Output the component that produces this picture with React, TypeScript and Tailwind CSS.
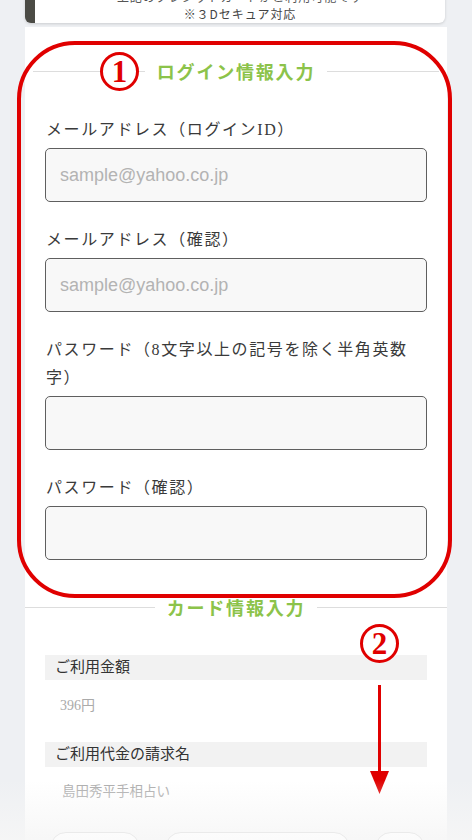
import React from "react";

const serif = "font-['Liberation_Serif','Noto_Sans_CJK_JP',serif]";
const sans = "font-['Noto_Sans_CJK_JP','Noto_Sans',sans-serif]";

interface FieldProps {
  label: React.ReactNode;
  placeholder?: string;
  type?: string;
  first?: boolean;
}

function Field({ label, placeholder, type = "text", first }: FieldProps) {
  return (
    <div className={first ? "mt-[31px]" : "mt-[24px]"}>
      <label className={`block w-[368px] pl-[1px] text-[16px] leading-[28px] tracking-[0.1em] text-[#3a3a3a] ${serif}`}>
        {label}
      </label>
      <input
        type={type}
        placeholder={placeholder}
        className="mt-[4px] block h-[54px] w-full rounded-[5px] border border-[#5f5f5f] bg-[#f8f8f8] px-[14px] font-['Liberation_Sans',Arial,sans-serif] text-[18px] text-[#333] placeholder:text-[#b3b3b3] focus:outline-none"
      />
    </div>
  );
}

function SectionTitle({ text, inset }: { text: string; inset?: boolean }) {
  return (
    <div className={`flex h-[28px] items-center ${inset ? "px-[8px]" : ""}`}>
      <div className="h-px flex-1 bg-[#dddddd]" />
      <span className={`mx-[12px] text-[18px] font-bold leading-[28px] tracking-[0.1em] text-[#8cc34a] ${sans}`}>
        {text}
      </span>
      <div className="h-px flex-1 bg-[#dddddd]" />
    </div>
  );
}

function CircledNumber({ n, className }: { n: string; className: string }) {
  return (
    <div
      className={`absolute flex h-[39px] w-[39px] items-center justify-center rounded-full border-[3px] border-[#e00000] bg-white ${className}`}
    >
      <span className="font-['Liberation_Serif',serif] text-[31px] font-bold leading-none text-[#e00000]">{n}</span>
    </div>
  );
}

export default function App() {
  return (
    <div className="relative h-[840px] overflow-hidden bg-[#eef0f3]">
      {/* card accepted notice (scrolled mostly out of view) */}
      <div className="ml-[25px] mt-[-14px] w-[420px] rounded-b-[6px] border-l-[10px] border-[#4b4b45] bg-white pb-[1px] pt-[2px] text-center shadow-[0_1px_3px_rgba(0,0,0,0.15)]">
        <p className={`text-[12px] leading-[17px] tracking-[0.08em] text-[#555] ${sans}`}>
          上記のクレジットカードがご利用可能です
        </p>
        <p className={`text-[12px] leading-[17px] tracking-[0.08em] text-[#444] ${sans}`}>※３Dセキュア対応</p>
      </div>

      <div className="relative ml-[25px] mt-[4px] w-[422px] bg-white pb-[80px] pt-[30px]">
        {/* login info */}
        <SectionTitle text="ログイン情報入力" inset />
        <div className="px-[20px]">
          <Field first label="メールアドレス（ログインID）" placeholder="sample@yahoo.co.jp" type="email" />
          <Field label="メールアドレス（確認）" placeholder="sample@yahoo.co.jp" type="email" />
          <Field label="パスワード（8文字以上の記号を除く半角英数字）" type="password" />
          <Field label="パスワード（確認）" type="password" />
        </div>

        {/* card info */}
        <div className="mt-[33px]">
          <SectionTitle text="カード情報入力" />
        </div>
        <div className="px-[20px]">
          <div className={`mt-[34px] h-[25px] bg-[#f2f2f2] pl-[10px] text-[15px] leading-[25px] text-[#333] ${serif}`}>
            ご利用金額
          </div>
          <p className={`mt-[14px] pl-[15px] text-[14px] leading-[24px] text-[#aaa] ${serif}`}>396円</p>
          <div className={`mt-[24px] h-[25px] bg-[#f2f2f2] pl-[10px] text-[15px] leading-[25px] text-[#333] ${serif}`}>
            ご利用代金の請求名
          </div>
          <p className={`mt-[13px] pl-[17px] text-[13.5px] leading-[24px] text-[#aaa] ${serif}`}>島田秀平手相占い</p>
        </div>

        {/* annotations */}
        <div className="pointer-events-none absolute left-[-8px] top-[14px] h-[557px] w-[435px] rounded-[58px] border-[4px] border-[#e00000]" />
        <CircledNumber n="1" className="left-[75px] top-[25px]" />
        <CircledNumber n="2" className="left-[335px] top-[597px]" />
        <div className="absolute left-[345px] top-[658px] flex flex-col items-center">
          <div className="h-[88px] w-[3px] bg-[#e00000]" />
          <svg width="19" height="23" viewBox="0 0 19 23" className="-mt-[2px]">
            <path d="M0 0 L19 0 L9.5 23 Z" fill="#e00000" />
          </svg>
        </div>
      </div>

      {/* sticky footer fading in */}
      <div className="absolute bottom-0 left-0 h-[60px] w-full bg-gradient-to-b from-white/0 to-[#f6f6f6]/90" />
      <div className="absolute bottom-[-24px] left-0 flex w-full items-start gap-[25px] pl-[50px] pr-[47px] opacity-60">
        <div className="h-[32px] w-[90px] rounded-full border border-[#e2e2e2] bg-white" />
        <div className="h-[32px] flex-1 rounded-full border border-[#e2e2e2] bg-white" />
        <div className="h-[32px] w-[50px] rounded-full border border-[#e2e2e2] bg-white" />
      </div>
    </div>
  );
}
